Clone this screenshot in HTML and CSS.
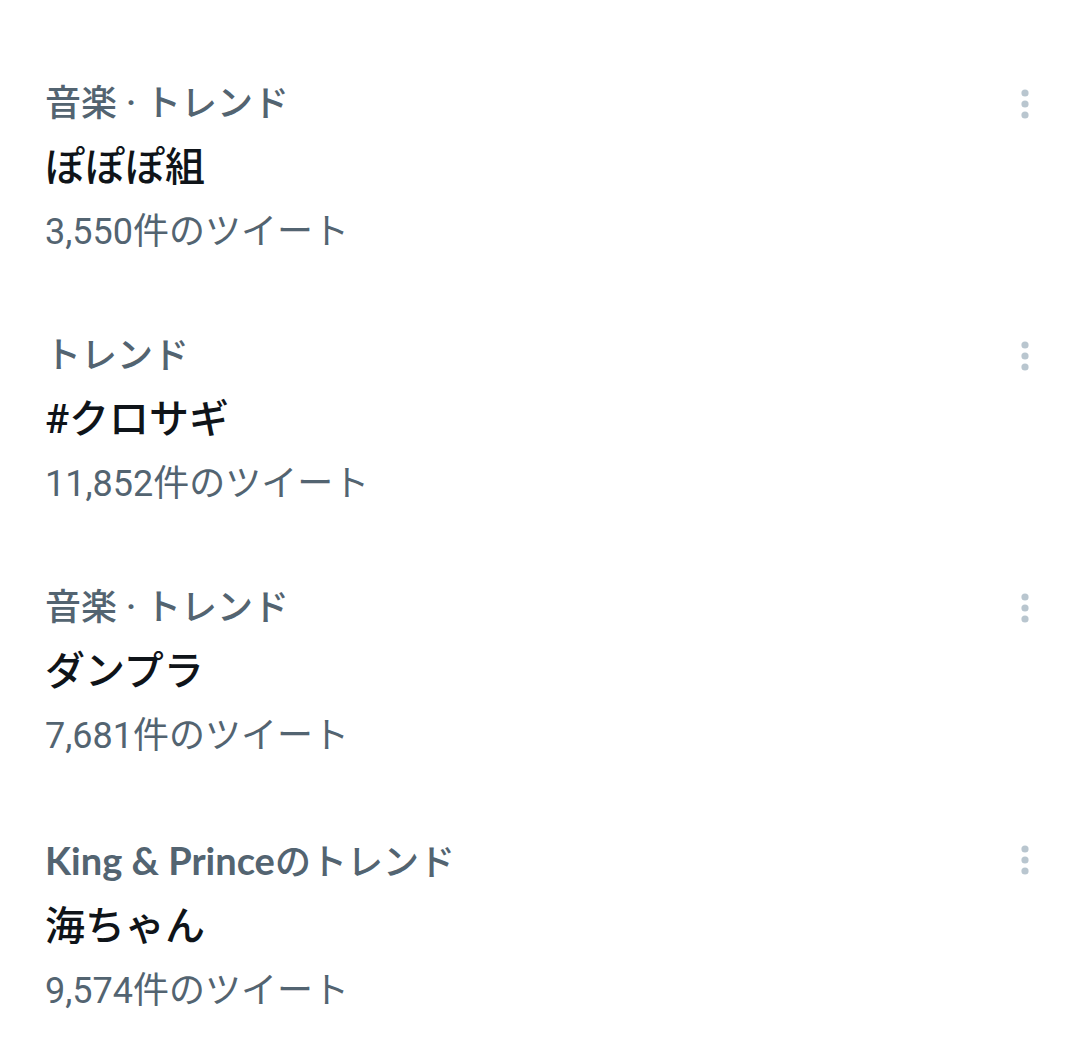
FILE: index.html
```html
<!DOCTYPE html>
<html lang="ja">
<head>
<meta charset="utf-8">
<link rel="stylesheet" href="styles.css">
</head>
<body>
<div class="list">
  <div class="trend">
    <div class="text">
      <div class="cat">音楽 · トレンド</div>
      <div class="title">ぽぽぽ組</div>
      <div class="count">3,550件のツイート</div>
    </div>
    <div class="more"><svg viewBox="0 0 8 30" width="8" height="30"><circle cx="4" cy="4" r="3.6"/><circle cx="4" cy="15" r="3.6"/><circle cx="4" cy="26" r="3.6"/></svg></div>
  </div>
  <div class="trend">
    <div class="text">
      <div class="cat">トレンド</div>
      <div class="title">#クロサギ</div>
      <div class="count">11,852件のツイート</div>
    </div>
    <div class="more"><svg viewBox="0 0 8 30" width="8" height="30"><circle cx="4" cy="4" r="3.6"/><circle cx="4" cy="15" r="3.6"/><circle cx="4" cy="26" r="3.6"/></svg></div>
  </div>
  <div class="trend">
    <div class="text">
      <div class="cat">音楽 · トレンド</div>
      <div class="title">ダンプラ</div>
      <div class="count">7,681件のツイート</div>
    </div>
    <div class="more"><svg viewBox="0 0 8 30" width="8" height="30"><circle cx="4" cy="4" r="3.6"/><circle cx="4" cy="15" r="3.6"/><circle cx="4" cy="26" r="3.6"/></svg></div>
  </div>
  <div class="trend">
    <div class="text">
      <div class="cat"><span class="latin">King &amp; Prince</span>のトレンド</div>
      <div class="title">海ちゃん</div>
      <div class="count">9,574件のツイート</div>
    </div>
    <div class="more"><svg viewBox="0 0 8 30" width="8" height="30"><circle cx="4" cy="4" r="3.6"/><circle cx="4" cy="15" r="3.6"/><circle cx="4" cy="26" r="3.6"/></svg></div>
  </div>
</div>
</body>
</html>
```
FILE: styles.css
```css
html, body {
  margin: 0;
  padding: 0;
  background: #ffffff;
}
body {
  font-family: "Roboto", "Noto Sans CJK JP", sans-serif;
  width: 1080px;
  height: 1054px;
  overflow: hidden;
}
.list {
  display: flex;
  flex-direction: column;
  gap: 60px;
  padding: 72px 0 0 45px;
}
.trend {
  display: flex;
  justify-content: space-between;
  align-items: flex-start;
  padding-right: 51px;
}
.text {
  display: flex;
  flex-direction: column;
}
.cat {
  font-size: 36px;
  line-height: 64px;
  color: #536471;
  font-weight: 500;
}
.latin {
  font-family: "Lato", "Noto Sans CJK JP", sans-serif;
  font-weight: 700;
  font-size: 38px;
}
.title {
  font-size: 40px;
  line-height: 64px;
  color: #0f1419;
  font-weight: 500;
}
.count {
  font-size: 36px;
  line-height: 64px;
  color: #536471;
  font-weight: 400;
}
.more {
  padding-top: 17px;
  display: flex;
}
.more svg {
  fill: #b9c6cf;
}
```
